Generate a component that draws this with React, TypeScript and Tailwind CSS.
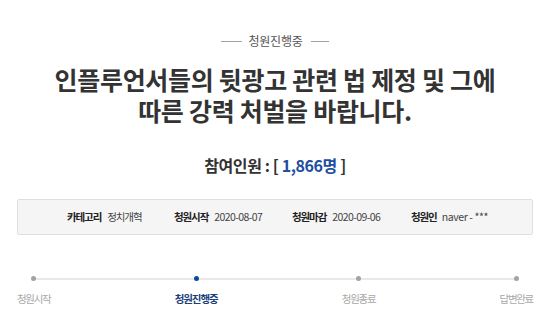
import React from "react";

const font = { fontFamily: '"Noto Sans CJK KR", "Noto Sans", sans-serif' };

export default function App() {
  const steps = [
    { label: "청원시작", active: false },
    { label: "청원진행중", active: true },
    { label: "청원종료", active: false },
    { label: "답변완료", active: false },
  ];
  return (
    <div className="w-[550px] h-[322px] bg-white overflow-hidden" style={font}>
      <div className="flex items-center justify-center pt-[32px] h-[50px]">
        <span className="block w-[21px] h-px bg-[#a0a0a0]" />
        <span className="ml-[6px] mr-[8px] text-[12px] leading-[18px] text-[#555] tracking-[-0.2px]">청원진행중</span>
        <span className="block w-[18px] h-px bg-[#a0a0a0]" />
      </div>
      <h1 className="mt-[14px] text-center text-[25px] leading-[31px] font-bold text-[#333] tracking-[-0.3px]">
        <div>인플루언서들의 뒷광고 관련 법 제정 및 그에</div>
        <div>따른 강력 처벌을 바랍니다.</div>
      </h1>
      <div className="mt-[28px] text-center text-[16px] leading-[22px] font-bold text-[#333] tracking-[-0.4px]">
        참여인원 : [ <span className="text-[#1f4f9e]">1,866명</span> ]
      </div>
      <div className="mx-[17px] mt-[23px] h-[36px] bg-[#f5f5f5] border border-[#dfdfdf] rounded-[2px] flex items-center pl-[49px] text-[10.5px] leading-[14px] text-[#444]">
        <div className="w-[107px] flex">
          <span className="font-bold text-[#222] tracking-[-1.1px]">카테고리</span>
          <span className="ml-[6px] tracking-[-1.1px]">정치개혁</span>
        </div>
        <div className="w-[118px] flex">
          <span className="font-bold text-[#222] tracking-[-1.1px]">청원시작</span>
          <span className="ml-[6px] tracking-[-0.6px]">2020-08-07</span>
        </div>
        <div className="w-[119px] flex">
          <span className="font-bold text-[#222] tracking-[-1.1px]">청원마감</span>
          <span className="ml-[6px] tracking-[-0.6px]">2020-09-06</span>
        </div>
        <div className="flex">
          <span className="font-bold text-[#222] tracking-[-1.1px]">청원인</span>
          <span className="ml-[5px] tracking-[-0.4px]">naver - ***</span>
        </div>
      </div>
      <div className="relative mx-[17px] mt-[41px] flex justify-between">
        <div className="absolute left-[16px] right-[18px] top-[1.5px] h-[2px] bg-[#e8e8e8]" />
        {steps.map((s) => (
          <div key={s.label} className="relative flex flex-col items-center">
            <span
              className={
                s.active
                  ? "block w-[5px] h-[5px] rounded-full bg-[#0c4a9e]"
                  : "block w-[5px] h-[5px] rounded-full bg-[#a3a3a3]"
              }
            />
            <span
              className={
                s.active
                  ? "mt-[11px] text-[10.5px] leading-[14px] font-bold text-[#1c3f7a] tracking-[-1.1px]"
                  : "mt-[11px] text-[10.5px] leading-[14px] text-[#a8a8a8] tracking-[-1.3px]"
              }
            >
              {s.label}
            </span>
          </div>
        ))}
      </div>
    </div>
  );
}
